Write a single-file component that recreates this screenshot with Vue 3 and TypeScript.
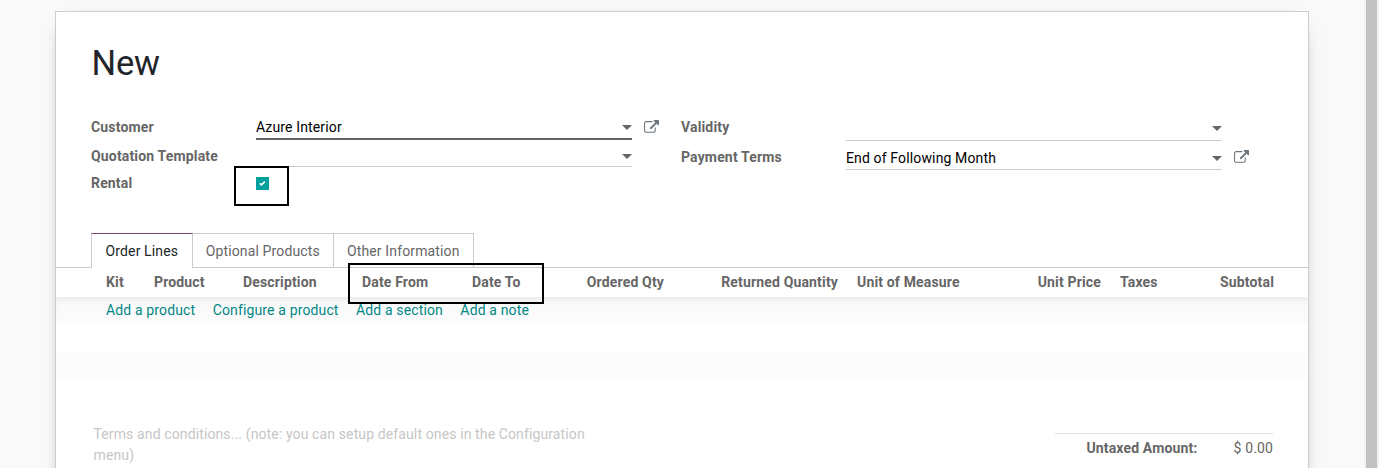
<script setup lang="ts">
import { ref } from 'vue'

interface Column {
  label: string
  align: 'left' | 'right'
}

const columns: Column[] = [
  { label: 'Kit', align: 'left' },
  { label: 'Product', align: 'left' },
  { label: 'Description', align: 'left' },
  { label: 'Date From', align: 'left' },
  { label: 'Date To', align: 'left' },
  { label: 'Ordered Qty', align: 'right' },
  { label: 'Returned Quantity', align: 'right' },
  { label: 'Unit of Measure', align: 'left' },
  { label: 'Unit Price', align: 'right' },
  { label: 'Taxes', align: 'left' },
  { label: 'Subtotal', align: 'right' },
]

const tabs: string[] = ['Order Lines', 'Optional Products', 'Other Information']
const actions: string[] = ['Add a product', 'Configure a product', 'Add a section', 'Add a note']
const activeTab = ref(0)
</script>

<template>
  <div class="page">
    <main class="sheet">
      <h1 class="title">New</h1>

      <section class="groups">
        <div class="group">
          <div class="row row-customer">
            <label class="label">Customer</label>
            <div class="field focused"><span>Azure Interior</span><i class="caret"></i></div>
            <svg class="external" viewBox="0 0 1792 1792">
              <path d="M1408 928v320q0 119-84.500 203.500t-203.500 84.500h-832q-119 0-203.500-84.500t-84.500-203.500v-832q0-119 84.500-203.500t203.500-84.500h704q14 0 23 9t9 23v64q0 14-9 23t-23 9h-704q-66 0-113 47t-47 113v832q0 66 47 113t113 47h832q66 0 113-47t47-113v-320q0-14 9-23t23-9h64q14 0 23 9t9 23zm384-864v512q0 26-19 45t-45 19-45-19l-176-176-652 652q-10 10-23 10t-23-10l-114-114q-10-10-10-23t10-23l652-652-176-176q-19-19-19-45t19-45 45-19h512q26 0 45 19t19 45z" />
            </svg>
          </div>
          <div class="row row-template">
            <label class="label">Quotation Template</label>
            <div class="field"><i class="caret"></i></div>
          </div>
          <div class="row row-rental">
            <label class="label">Rental</label>
            <div class="check">
              <svg viewBox="0 0 13 13"><path d="M3.700 6.300 5.500 7.900 8.800 4.600" /></svg>
              <span class="frame frame-check"></span>
            </div>
          </div>
        </div>

        <div class="group">
          <div class="row row-validity">
            <label class="label">Validity</label>
            <div class="field"><i class="caret"></i></div>
          </div>
          <div class="row row-terms">
            <label class="label">Payment Terms</label>
            <div class="field"><span>End of Following Month</span><i class="caret"></i></div>
            <svg class="external" viewBox="0 0 1792 1792">
              <path d="M1408 928v320q0 119-84.500 203.500t-203.500 84.500h-832q-119 0-203.500-84.500t-84.500-203.500v-832q0-119 84.500-203.500t203.500-84.500h704q14 0 23 9t9 23v64q0 14-9 23t-23 9h-704q-66 0-113 47t-47 113v832q0 66 47 113t113 47h832q66 0 113-47t47-113v-320q0-14 9-23t23-9h64q14 0 23 9t9 23zm384-864v512q0 26-19 45t-45 19-45-19l-176-176-652 652q-10 10-23 10t-23-10l-114-114q-10-10-10-23t10-23l652-652-176-176q-19-19-19-45t19-45 45-19h512q26 0 45 19t19 45z" />
            </svg>
          </div>
        </div>
      </section>

      <nav class="tabs">
        <a
          v-for="(tab, i) in tabs"
          :key="tab"
          class="tab"
          :class="{ active: i === activeTab }"
          @click="activeTab = i"
        >{{ tab }}</a>
      </nav>

      <section class="lines">
        <div class="head">
          <span v-for="col in columns" :key="col.label" :class="col.align">{{ col.label }}</span>
          <span class="frame frame-dates"></span>
        </div>
        <div class="line line-actions">
          <a v-for="action in actions" :key="action">{{ action }}</a>
        </div>
        <div class="line"></div>
        <div class="line striped"></div>
        <div class="line"></div>
      </section>

      <footer class="bottom">
        <p class="terms">Terms and conditions... (note: you can setup default ones in the Configuration menu)</p>
        <div class="totals"><b>Untaxed Amount:</b><span>$ 0.00</span></div>
      </footer>
    </main>
    <div class="scrollbar"></div>
  </div>
</template>

<style>
body {
  margin: 0;
  overflow: hidden;
}
</style>

<style scoped>
.page {
  box-sizing: border-box;
  display: flex;
  justify-content: space-between;
  height: 468px;
  padding-left: 55px;
  overflow: hidden;
  background: #f9f9f9;
  color: #666;
  font: 14px/21px Roboto, sans-serif;
  letter-spacing: 0.14px;
}
.sheet {
  box-sizing: border-box;
  width: 1254px;
  height: 560px;
  margin-top: 11px;
  border: 1px solid #c9ccd2;
  background: #fff;
  box-shadow: 0 5px 20px -15px #000;
}
.scrollbar {
  box-sizing: border-box;
  width: 15px;
  border: solid #f1f1f1;
  border-width: 0 2px;
  background: #c1c1c1;
}
.title {
  margin: 30px 0 0 35.500px;
  color: #212529;
  font-size: 34.500px;
  font-weight: 400;
  line-height: 42px;
  letter-spacing: -0.2px;
}
.groups {
  display: flex;
  gap: 14px;
  height: 117px;
  margin: 32px 0 0 35px;
}
.group {
  width: 576px;
}
.row {
  display: flex;
  align-items: flex-start;
}
.label {
  width: 165px;
  padding-top: 1px;
  font-weight: 700;
  letter-spacing: 0.16px;
}
.field {
  box-sizing: border-box;
  display: flex;
  align-items: center;
  justify-content: space-between;
  width: 376px;
  height: 24px;
  border-bottom: 1px solid #ccc;
  color: #000;
}
.focused {
  border-bottom: 2px solid #666;
}
.caret {
  margin: 1px 0 0 auto;
  border: solid transparent;
  border-width: 5px 5px 0;
  border-top-color: #666;
}
.external {
  width: 15px;
  height: 15px;
  margin: 4px 0 0 11.500px;
  fill: #6c757d;
}
.row-customer { height: 29px; }
.row-template { height: 27px; }
.row-template .field { height: 22px; }
.row-validity { height: 30px; }
.row-validity .field { height: 25px; }
.row-terms .field { height: 24px; padding-top: 1px; }
.row-terms .caret { margin-top: 0; }
.check {
  position: relative;
  width: 13px;
  height: 13px;
  margin-top: 5px;
  background: #00a09d;
}
.check svg {
  display: block;
  width: 13px;
  height: 13px;
  fill: none;
  stroke: #fff;
  stroke-width: 1.600;
}
.frame {
  position: absolute;
  box-sizing: border-box;
  border: 2px solid #000;
}
.frame-check {
  top: -11px;
  left: -22px;
  width: 55px;
  height: 40px;
}
.tabs {
  display: flex;
  height: 34px;
  padding-left: 35px;
  border-bottom: 1px solid #c9ccd2;
}
.tab {
  box-sizing: border-box;
  height: 34px;
  margin-right: -1px;
  padding: 7px 13px 0 13px;
  border: 1px solid #c9ccd2;
  border-bottom: 0;
}
.active {
  z-index: 1;
  height: 35px;
  padding-right: 13.500px;
  padding-left: 13.500px;
  border-top-color: #7c4b6e;
  background: #fff;
  color: #212529;
}
.lines {
  width: 1251px;
}
.head {
  position: relative;
  display: grid;
  grid-template-columns: 48px 89px 119px 110px 76px 116px 174px 146px 117px 54px 119px;
  height: 29px;
  padding: 0 33px 0 50px;
  font-weight: 700;
  line-height: 29px;
  letter-spacing: 0.16px;
  white-space: nowrap;
}
.right {
  text-align: right;
}
.left {
  text-align: left;
}
.right + .left {
  padding-left: 19px;
}
.frame-dates {
  top: -5px;
  left: 292px;
  width: 196px;
  height: 41px;
}
.line {
  height: 27px;
}
.striped {
  background: #fcfcfc;
}
.line-actions {
  display: flex;
  gap: 17.400px;
  padding-left: 50px;
  background: #fbfbfb;
  box-shadow: inset 0 7px 9px -5px #e6e6e6;
  color: #008784;
  line-height: 26px;
}
.bottom {
  display: flex;
  justify-content: space-between;
  padding: 19px 35px 0 37.500px;
}
.terms {
  width: 500px;
  margin: 0;
  color: #c6c6c6;
  letter-spacing: 0.12px;
}
.totals {
  display: flex;
  justify-content: space-between;
  box-sizing: border-box;
  width: 218px;
  margin-top: 9px;
  padding: 4px 0 0 31.500px;
  border-top: 1px solid #dee2e6;
}
.totals b {
  font-weight: 700;
  letter-spacing: 0.14px;
}
</style>
